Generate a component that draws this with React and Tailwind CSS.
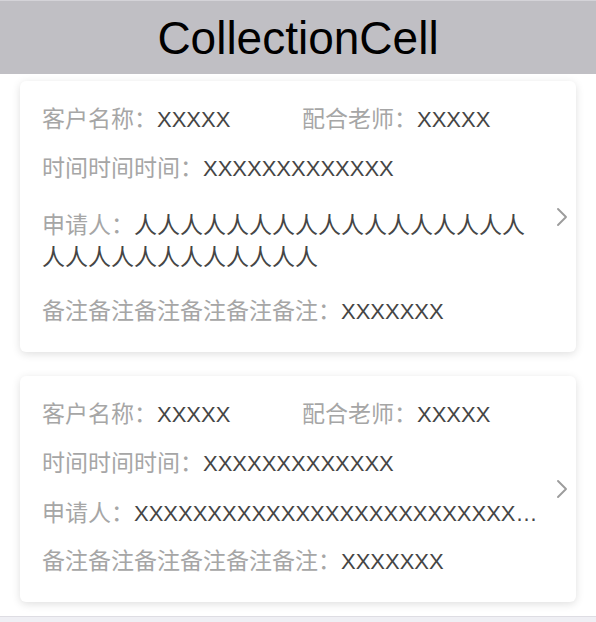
import React from "react";

const STACK = { fontFamily: '"Liberation Sans", "Noto Sans CJK SC", sans-serif' };

function Label({ children }) {
  return <span className="text-[23px] text-[#a6a6a6]">{children}</span>;
}

function Value({ children, cjk }) {
  return cjk ? (
    <span className="text-[23px] text-[#454545]">{children}</span>
  ) : (
    <span className="text-[22px] text-[#454545]">{children}</span>
  );
}

function Chevron() {
  return (
    <svg width="12" height="20" viewBox="0 0 12 20" className="shrink-0">
      <path d="M2 2 L10 10 L2 18" fill="none" stroke="#9c9c9c" strokeWidth="1.9" strokeLinecap="round" strokeLinejoin="round" />
    </svg>
  );
}

function Card({ multiline }) {
  return (
    <div className="mx-[20px] flex items-center rounded-[6px] bg-white pl-[22px] pr-[8px] pt-[15px] pb-[15px] shadow-[0_2px_8px_rgba(0,0,0,0.13)]">
      <div className="min-w-0 flex-1">
        <div className="flex h-[49px] items-center whitespace-nowrap leading-[32px]">
          <div className="w-[260px]">
            <Label>客户名称：</Label>
            <Value>XXXXX</Value>
          </div>
          <div>
            <Label>配合老师：</Label>
            <Value>XXXXX</Value>
          </div>
        </div>
        <div className="flex h-[49px] items-center whitespace-nowrap leading-[32px]">
          <div>
            <Label>时间时间时间：</Label>
            <Value>XXXXXXXXXXXXX</Value>
          </div>
        </div>
        {multiline ? (
          <div className="py-[15px] text-[23px] leading-[32px] break-all">
            <Label>申请人：</Label>
            <Value cjk>人人人人人人人人人人人人人人人人人人人人人人人人人人人人人</Value>
          </div>
        ) : (
          <div className="h-[49px] truncate text-[22px] leading-[49px] text-[#454545]">
            <Label>申请人：</Label>
            <Value>XXXXXXXXXXXXXXXXXXXXXXXXXXXXXXXXXXXXXXXXXX</Value>
          </div>
        )}
        <div className="flex h-[49px] items-center whitespace-nowrap leading-[32px]">
          <div>
            <Label>备注备注备注备注备注备注：</Label>
            <Value>XXXXXXX</Value>
          </div>
        </div>
      </div>
      <div className="ml-[16px]">
        <Chevron />
      </div>
    </div>
  );
}

export default function App() {
  return (
    <div className="flex min-h-screen w-[596px] flex-col bg-white" style={STACK}>
      <div className="flex h-[74px] items-center justify-center border-t border-[#d4d3d8] bg-[#c0bfc4]">
        <span className="text-[46px] leading-none text-black">CollectionCell</span>
      </div>
      <div className="flex flex-col gap-[24px] bg-white pt-[7px] pb-[14px]">
        <Card multiline />
        <Card />
      </div>
      <div className="flex-1 border-t border-[#dedde3] bg-[#efeff4]" />
    </div>
  );
}
